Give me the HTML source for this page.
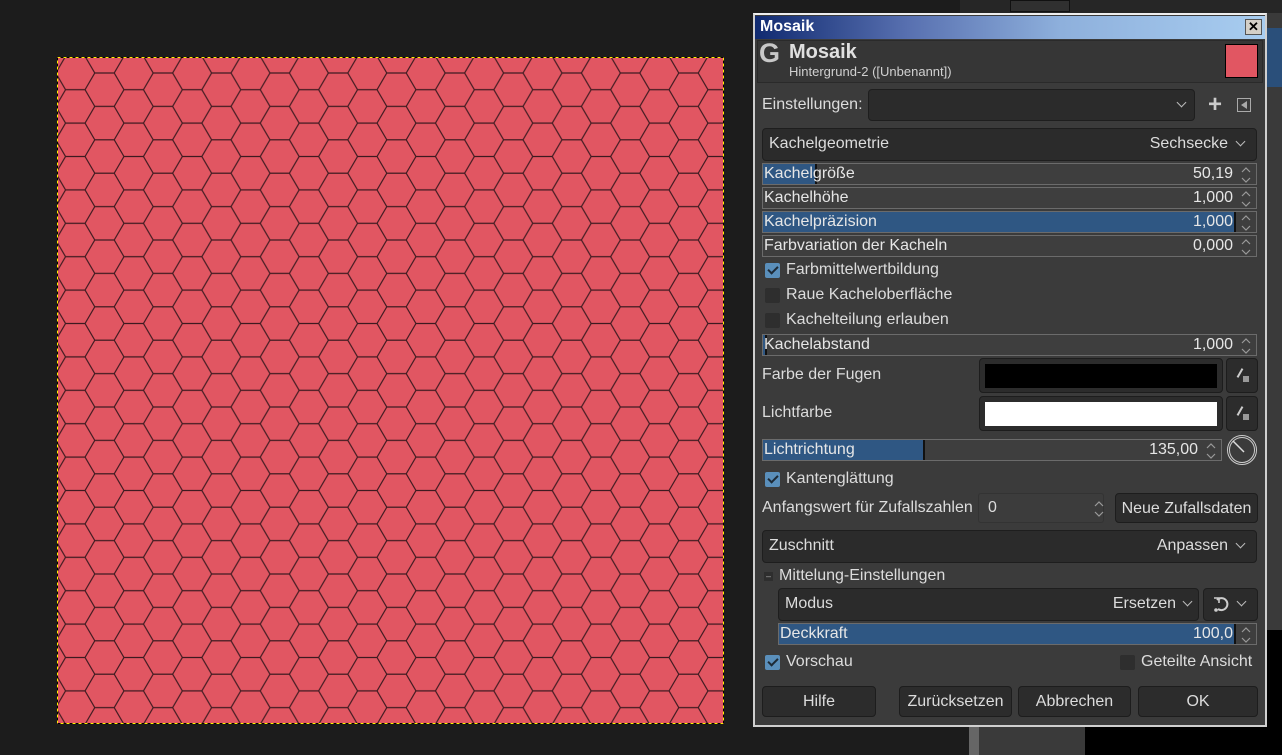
<!DOCTYPE html>
<html><head><meta charset="utf-8"><style>
*{box-sizing:border-box;margin:0;padding:0}
body{width:1282px;height:755px;background:#1c1c1c;position:relative;overflow:hidden;font-family:"Liberation Sans",sans-serif;color:#dcdcdc;font-size:16px}
.a{position:absolute}
.r{position:absolute;text-align:right}
.spin{position:absolute;left:762px;width:495px;height:22px;background:#3e3e3e;border:1px solid #6b6b6b;overflow:hidden}
.spin .f{position:absolute;left:0;top:0;bottom:0;background:#2f5783;border-right:2px solid #111}
.spin .l{position:absolute;left:1px;top:1px;font-size:16px;color:#e6e6e6}
.spin .v{position:absolute;right:23px;top:1px;font-size:16px;color:#e6e6e6}
.spin svg{position:absolute;right:4px;top:1px}
.combo{position:absolute;background:#2b2b2b;border:1px solid #1e1e1e;border-radius:4px}
.btn{position:absolute;background:#2c2c2c;border:1px solid #1d1d1d;border-radius:4px;text-align:center;line-height:29px;font-size:16px;color:#dcdcdc}
.cb{position:absolute;width:15px;height:15px;border-radius:2px;background:#2e2e2e}
.cb.on{background:#5a8fbb}
.cb.on::after{content:"";position:absolute;left:3px;top:3px;width:8px;height:4px;border-left:2px solid #1d2a36;border-bottom:2px solid #1d2a36;transform:rotate(-45deg)}
.chev{position:absolute;width:7px;height:7px;border-right:1.3px solid #bbb;border-bottom:1.3px solid #bbb;transform:rotate(45deg)}
</style></head><body>
<svg width="0" height="0" style="position:absolute"><defs><symbol id="ud" viewBox="0 0 12 20"><path d="M2,7L6,3L10,7M2,13L6,17L10,13" stroke="#9a9a9a" stroke-width="1.2" fill="none"/></symbol></defs></svg>
<div class="a" style="left:960px;top:0;width:322px;height:13px;background:#262626"></div>
<div class="a" style="left:1010px;top:0;width:60px;height:12px;background:#303030;border:1px solid #111"></div>
<div class="a" style="left:1267px;top:13px;width:15px;height:617px;background:#3a3a3a"></div>
<div class="a" style="left:1267px;top:28px;width:15px;height:59px;background:#2a4f7a"></div>
<div class="a" style="left:1267px;top:630px;width:15px;height:125px;background:#000"></div>
<div class="a" style="left:969px;top:727px;width:116px;height:28px;background:#3a3a3a"></div>
<div class="a" style="left:969px;top:727px;width:10px;height:28px;background:#666"></div>
<div class="a" style="left:1085px;top:727px;width:197px;height:28px;background:#000"></div>
<svg class="a" style="left:57px;top:57px" width="667" height="667">
<defs><pattern id="h" patternUnits="userSpaceOnUse" width="58.4" height="33.4" x="47.5" y="32.7">
<rect width="58.4" height="33.4" fill="#e15662"/>
<path d="M0,16.7H9.73M48.67,16.7H58.4M19.47,0H38.93M19.47,0L9.73,16.7L19.47,33.4M38.93,0L48.67,16.7L38.93,33.4M19.47,33.4H38.93" stroke="#3e1a20" stroke-width="1.2" fill="none"/>
</pattern></defs>
<rect width="667" height="667" fill="url(#h)"/>
<rect x="0.5" y="0.5" width="666" height="666" fill="none" stroke="#ffef00" stroke-dasharray="3,3"/>
<rect x="0.5" y="0.5" width="666" height="666" fill="none" stroke="#000" stroke-dasharray="3,3" stroke-dashoffset="3"/>
</svg>
<div class="a" style="left:753px;top:13px;width:514px;height:714px;background:#3b3b3b;border:2px solid #cfcfcf;border-top-color:#eee"></div>
<div class="a" style="left:755px;top:16px;width:510px;height:23px;background:linear-gradient(90deg,#102a70 0%,#5870b0 30%,#8eb0dc 60%,#a8cdf0 100%)"></div>
<div class="a" style="left:760px;top:18px;font-size:16px;font-weight:bold;color:#fff">Mosaik</div>
<div class="a" style="left:1245px;top:19px;width:17px;height:16px;background:#d4d0c8;border:1px solid #555;color:#000;font-size:13px;font-weight:bold;text-align:center;line-height:14px">✕</div>
<div class="a" style="left:757px;top:40px;width:506px;height:43px;background:#363636;border:1px solid #2a2a2a"></div>
<div class="a" style="left:759px;top:38px;font-size:27px;font-weight:bold;color:#c8c8c8">G</div>
<div class="a" style="left:789px;top:41px;font-size:20px;font-weight:bold;color:#e0e0e0">Mosaik</div>
<div class="a" style="left:789px;top:64px;font-size:13px;color:#d0d0d0">Hintergrund-2 ([Unbenannt])</div>
<div class="a" style="left:1225px;top:44px;width:33px;height:34px;background:#e15662;border:1px solid #000"></div>

<div class="a" style="left:762px;top:96px">Einstellungen:</div>
<div class="combo" style="left:868px;top:89px;width:327px;height:32px"></div>
<div class="chev" style="left:1178px;top:99px"></div>
<div class="a" style="left:1208px;top:91px;font-size:24px;font-weight:bold;color:#ccc">+</div>
<div class="a" style="left:1237px;top:98px;width:14px;height:14px;border:1.5px solid #aaa"></div>
<div class="a" style="left:1241px;top:101px;width:0;height:0;border-top:4px solid transparent;border-bottom:4px solid transparent;border-right:6px solid #aaa"></div>

<div class="combo" style="left:762px;top:128px;width:495px;height:33px"></div>
<div class="a" style="left:769px;top:135px">Kachelgeometrie</div>
<div class="r" style="right:54px;top:135px">Sechsecke</div>
<div class="chev" style="left:1237px;top:138px"></div>

<div class="spin" style="top:163px"><div class="f" style="width:54px"></div><span class="l">Kachelgröße</span><span class="v">50,19</span><svg width="12" height="20"><use href="#ud"/></svg></div>
<div class="spin" style="top:187px"><span class="l">Kachelhöhe</span><span class="v">1,000</span><svg width="12" height="20"><use href="#ud"/></svg></div>
<div class="spin" style="top:211px"><div class="f" style="width:473px"></div><span class="l">Kachelpräzision</span><span class="v">1,000</span><svg width="12" height="20"><use href="#ud"/></svg></div>
<div class="spin" style="top:235px"><span class="l">Farbvariation der Kacheln</span><span class="v">0,000</span><svg width="12" height="20"><use href="#ud"/></svg></div>

<div class="cb on" style="left:765px;top:263px"></div><div class="a" style="left:786px;top:261px">Farbmittelwertbildung</div>
<div class="cb" style="left:765px;top:288px"></div><div class="a" style="left:786px;top:286px">Raue Kacheloberfläche</div>
<div class="cb" style="left:765px;top:313px"></div><div class="a" style="left:786px;top:311px">Kachelteilung erlauben</div>

<div class="spin" style="top:334px"><div class="f" style="width:4px"></div><span class="l">Kachelabstand</span><span class="v">1,000</span><svg width="12" height="20"><use href="#ud"/></svg></div>

<div class="a" style="left:762px;top:366px">Farbe der Fugen</div>
<div class="btn" style="left:979px;top:358px;width:244px;height:35px"></div>
<div class="a" style="left:985px;top:364px;width:232px;height:24px;background:#000"></div>
<div class="btn" style="left:1226px;top:358px;width:32px;height:35px"></div>
<div class="a" style="left:1243px;top:376px;width:6px;height:6px;background:#999"></div>
<div class="a" style="left:1235px;top:372px;width:10px;height:2px;background:#ccc;transform:rotate(-60deg)"></div>
<div class="a" style="left:762px;top:404px">Lichtfarbe</div>
<div class="btn" style="left:979px;top:396px;width:244px;height:35px"></div>
<div class="a" style="left:985px;top:402px;width:232px;height:24px;background:#fff"></div>
<div class="btn" style="left:1226px;top:396px;width:32px;height:35px"></div>
<div class="a" style="left:1243px;top:414px;width:6px;height:6px;background:#999"></div>
<div class="a" style="left:1235px;top:410px;width:10px;height:2px;background:#ccc;transform:rotate(-60deg)"></div>

<div class="spin" style="top:439px;width:460px"><div class="f" style="width:162px"></div><span class="l">Lichtrichtung</span><span class="v">135,00</span><svg width="12" height="20"><use href="#ud"/></svg></div>
<svg class="a" style="left:1226px;top:434px" width="32" height="32"><circle cx="16" cy="16" r="14.5" fill="none" stroke="#ccc" stroke-width="1"/><circle cx="16" cy="16" r="12.5" fill="none" stroke="#ccc" stroke-width="1"/><line x1="7" y1="7" x2="18" y2="18" stroke="#ddd" stroke-width="1.5"/></svg>

<div class="cb on" style="left:765px;top:472px"></div><div class="a" style="left:786px;top:470px">Kantenglättung</div>
<div class="a" style="left:762px;top:499px">Anfangswert für Zufallszahlen</div>
<div class="a" style="left:978px;top:493px;width:126px;height:30px;background:#3c3c3c;border:1px solid #333;border-radius:3px"></div>
<div class="a" style="left:988px;top:499px">0</div>
<svg class="a" style="left:1093px;top:497px" width="12" height="24" viewBox="0 0 12 20"><use href="#ud"/></svg>
<div class="btn" style="left:1115px;top:493px;width:143px;height:30px">Neue Zufallsdaten</div>

<div class="combo" style="left:762px;top:530px;width:495px;height:33px"></div>
<div class="a" style="left:769px;top:537px">Zuschnitt</div>
<div class="r" style="right:54px;top:537px">Anpassen</div>
<div class="chev" style="left:1237px;top:540px"></div>

<div class="a" style="left:764px;top:572px;width:9px;height:9px;background:#2e2e2e;color:#aaa;font-size:9px;line-height:8px;text-align:center">–</div>
<div class="a" style="left:779px;top:567px">Mittelung-Einstellungen</div>
<div class="combo" style="left:778px;top:588px;width:421px;height:33px"></div>
<div class="a" style="left:785px;top:595px">Modus</div>
<div class="r" style="right:106px;top:595px">Ersetzen</div>
<div class="chev" style="left:1184px;top:598px"></div>
<div class="combo" style="left:1203px;top:588px;width:55px;height:33px"></div>
<svg class="a" style="left:1212px;top:595px" width="18" height="18"><path d="M5,5A6,6 0 1 1 6,14" stroke="#ccc" stroke-width="2" fill="none"/><path d="M2,3L7,3L7,8" stroke="#ccc" stroke-width="1.6" fill="none"/><circle cx="4" cy="15" r="1.8" fill="#ccc"/></svg>
<div class="chev" style="left:1238px;top:598px"></div>
<div class="spin" style="left:778px;top:623px;width:479px"><div class="f" style="width:457px"></div><span class="l">Deckkraft</span><span class="v">100,0</span><svg width="12" height="20"><use href="#ud"/></svg></div>

<div class="cb on" style="left:765px;top:655px"></div><div class="a" style="left:786px;top:653px">Vorschau</div>
<div class="cb" style="left:1120px;top:655px"></div><div class="a" style="left:1141px;top:653px">Geteilte Ansicht</div>

<div class="btn" style="left:762px;top:686px;width:114px;height:31px">Hilfe</div>
<div class="btn" style="left:899px;top:686px;width:113px;height:31px">Zurücksetzen</div>
<div class="btn" style="left:1018px;top:686px;width:113px;height:31px">Abbrechen</div>
<div class="btn" style="left:1138px;top:686px;width:120px;height:31px">OK</div>
</body></html>
